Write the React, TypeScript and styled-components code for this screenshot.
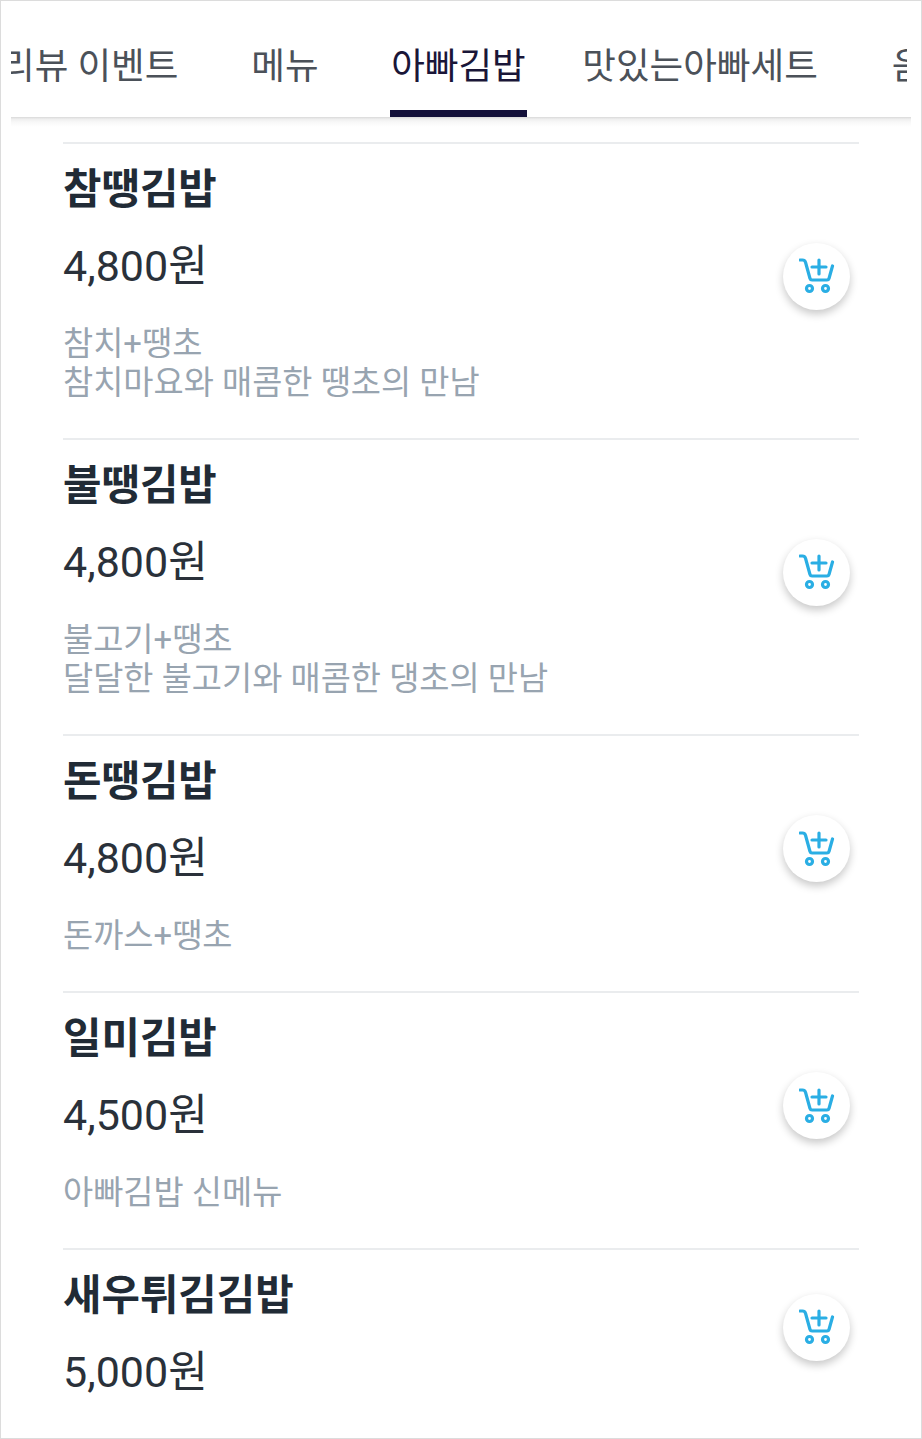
import styled, {createGlobalStyle} from 'styled-components';

const fontStack = `Roboto, "Noto Sans CJK KR", sans-serif`;

const tabs = [
    {label: '리뷰 이벤트', gap: 0},
    {label: '메뉴', gap: 73},
    {label: '아빠김밥', gap: 71, active: true},
    {label: '맛있는아빠세트', gap: 55},
    {label: '음료', gap: 74},
];

const items = [
    {name: '참땡김밥', price: '4,800원', desc: ['참치+땡초', '참치마요와 매콤한 땡초의 만남']},
    {name: '불땡김밥', price: '4,800원', desc: ['불고기+땡초', '달달한 불고기와 매콤한 댕초의 만남']},
    {name: '돈땡김밥', price: '4,800원', desc: ['돈까스+땡초']},
    {name: '일미김밥', price: '4,500원', desc: ['아빠김밥 신메뉴']},
    {name: '새우튀김김밥', price: '5,000원', desc: []},
];

function CartPlusIcon() {
    return (
        <svg width="36" height="36" viewBox="1 1 36 36" fill="none" stroke="#2aaee4" strokeWidth="3.200" strokeLinecap="round" strokeLinejoin="round">
            <path d="M2 3h2.500c1.500 0 2.500.8 3 2.200L12 21.500c.3 1 1 1.500 2 1.500h15c1 0 1.700-.5 2-1.500L34.500 9" />
            <path d="M21 3v14M14 10h14" />
            <circle cx="11.500" cy="31.500" r="3" />
            <circle cx="27.500" cy="31.500" r="3" />
        </svg>
    );
}

export default function App() {
    return (
        <Frame>
            <GlobalStyle />
            <TabBar>
                <TabViewport>
                    <TabTrack>
                        {tabs.map((tab) => (
                            <Tab key={tab.label} $gap={tab.gap} $active={tab.active}>{tab.label}</Tab>
                        ))}
                    </TabTrack>
                </TabViewport>
            </TabBar>
            <MenuList>
                {items.map((item) => (
                    <MenuRow key={item.name}>
                        <MenuInfo>
                            <MenuName>{item.name}</MenuName>
                            <MenuPrice>{item.price}</MenuPrice>
                            {item.desc.length > 0 && (
                                <MenuDesc>
                                    {item.desc.map((line) => <div key={line}>{line}</div>)}
                                </MenuDesc>
                            )}
                        </MenuInfo>
                        <CartButton aria-label="담기"><CartPlusIcon /></CartButton>
                    </MenuRow>
                ))}
            </MenuList>
        </Frame>
    );
}

const GlobalStyle = createGlobalStyle`
    html, body {
        margin: 0;
        background: #fff;
    }
`;
const Frame = styled.div`
    width: 922px;
    height: 1439px;
    box-sizing: border-box;
    border: 1px solid #dcdcdc;
    overflow: hidden;
    background: #fff;
    font-family: ${fontStack};
`;
const TabBar = styled.div`
    position: relative;
    height: 116px;
    margin: 0 10px;
    padding-right: 4px;
    &::after {
        content: '';
        position: absolute;
        left: 0;
        right: 0;
        top: 100%;
        height: 10px;
        background: linear-gradient(#d9d9d9 0, #eeeeee 2px, #f8f8f8 5px, #fff 100%);
    }
`;
const TabViewport = styled.div`
    position: relative;
    z-index: 1;
    height: 100%;
    overflow: hidden;
`;
const TabTrack = styled.div`
    display: flex;
    height: 100%;
    margin-left: -10px;
    white-space: nowrap;
`;
const Tab = styled.div<{$gap: number; $active?: boolean}>`
    flex: none;
    box-sizing: border-box;
    height: 100%;
    margin-left: ${(p) => p.$gap}px;
    padding: 39px ${(p) => (p.$active ? '1.500px' : '0')} 0;
    font-size: 36.6px;
    line-height: 54px;
    color: ${(p) => (p.$active ? '#1a1638' : '#4b5159')};
    border-bottom: ${(p) => (p.$active ? '7px solid #14113a' : '0')};
`;
const MenuList = styled.div`
    padding: 25px 62px 0;
`;
const MenuRow = styled.div`
    display: flex;
    align-items: center;
    justify-content: space-between;
    padding-bottom: 30px;
    border-top: 2px solid #eaecee;
`;
const MenuInfo = styled.div`
    padding-top: 22px;
`;
const MenuName = styled.div`
    font-size: 41.8px;
    line-height: 48px;
    font-weight: 700;
    color: #212b36;
`;
const MenuPrice = styled.div`
    margin-top: 28px;
    padding-bottom: 8px;
    font-size: 43px;
    line-height: 48px;
    color: #2a313a;
`;
const MenuDesc = styled.div`
    padding-top: 27px;
    padding-bottom: 5px;
    font-size: 32.8px;
    line-height: 39px;
    color: #98a4b0;
`;
const CartButton = styled.button`
    display: flex;
    align-items: center;
    justify-content: center;
    width: 67px;
    height: 67px;
    margin-right: 9px;
    padding: 0;
    border: 0;
    border-radius: 50%;
    background: #fff;
    box-shadow: 0 4px 9px rgba(0, 0, 0, 0.22);
`;
